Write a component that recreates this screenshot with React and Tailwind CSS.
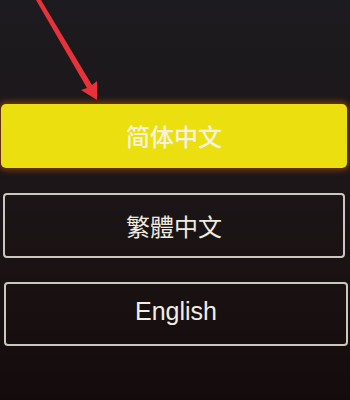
export default function App() {
  return (
    <div
      className="relative w-[350px] h-[400px] overflow-hidden flex flex-col bg-[linear-gradient(180deg,#1c1b1f_0%,#1c1618_45%,#191011_75%,#140b0c_100%)]"
      style={{ fontFamily: '"Liberation Sans", "Noto Sans CJK SC", sans-serif' }}
    >
      <svg className="absolute left-0 top-0" width="350" height="110" viewBox="0 0 350 110">
        <polygon points="36,0 41,0 92,85 97,81 97,100 81,90 87,88" fill="#e8323a" />
      </svg>
      <div className="mt-[104px] ml-[1px] mr-[3px] h-[64px] rounded-[5px] bg-[#ebdf10] shadow-[0_0_6px_2px_rgba(200,90,10,0.6)] flex items-center justify-center">
        <span className="text-[24px] text-[#f6f2e0] font-medium" style={{ fontFamily: '"Noto Sans CJK SC", sans-serif' }}>简体中文</span>
      </div>
      <div className="mt-[25px] ml-[3px] mr-[5px] h-[65px] rounded-[4px] border-2 border-[#c9c8bd] flex items-center justify-center">
        <span className="text-[24px] text-[#eeece2]" style={{ fontFamily: '"Noto Sans CJK TC", sans-serif' }}>繁體中文</span>
      </div>
      <div className="mt-[24px] ml-[4px] mr-[2px] h-[64px] rounded-[4px] border-2 border-[#c9c8bd] flex items-center justify-center">
        <span className="text-[25px] text-[#f0eee4] font-medium -mt-[4px]">English</span>
      </div>
    </div>
  );
}
